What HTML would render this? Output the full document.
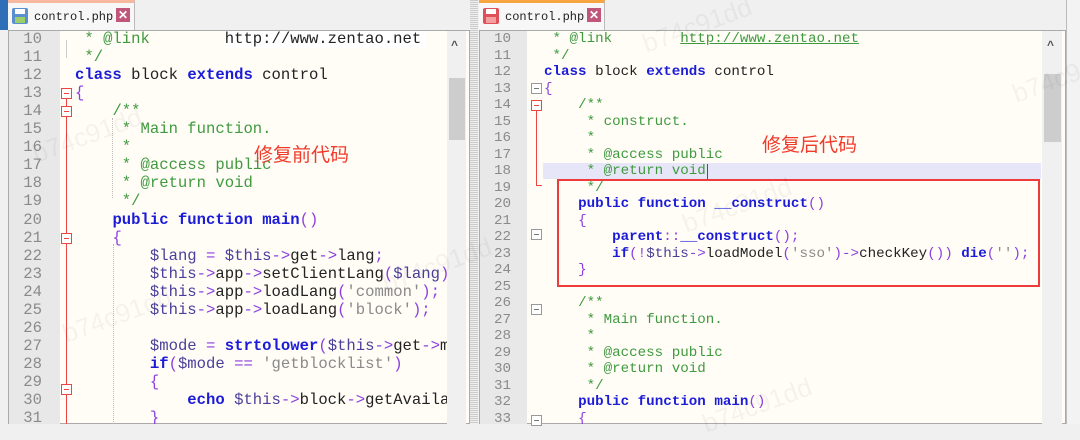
<!DOCTYPE html>
<html><head><meta charset="utf-8"><style>
*{margin:0;padding:0;box-sizing:border-box}
body{width:1080px;height:424px;overflow:hidden;background:#f0f0f0;position:relative;font-family:"Liberation Mono",monospace}
.abs{position:absolute}
.ed{position:absolute;background:#fffdf6;overflow:hidden}
.ln{position:absolute;color:#8a8a8a;text-align:right;white-space:pre}
.cl{position:absolute;white-space:pre}
.k{color:#1c1cd8;font-weight:bold}
.c{color:#3f9a3f}
.v{color:#4a3f9a}
.o{color:#8c3fe0}
.s{color:#8a8a8a}
.t{color:#222}
.fold{position:absolute;width:11px;height:11px;border:1px solid #999;background:#fff}
.fold:after{content:"";position:absolute;left:2px;right:2px;top:4px;height:1px;background:#777}
.fr{border-color:#e44}
.fr:after{background:#e44}
.cn{font-family:"Liberation Sans","Noto Sans CJK SC",sans-serif;color:#f03a2a;position:absolute}
.wm{position:absolute;color:rgba(0,0,0,0.045);font-family:"Liberation Sans",sans-serif;font-size:26px;transform:rotate(-20deg)}
</style></head><body>
<div class="abs" style="left:0;top:0;width:8px;height:30px;background:#2f6fb8"></div>
<div class="abs" style="left:8px;top:0;width:127px;height:30px;background:#f7f7f7;border-top:3px solid #f8b8a0;border-right:1px solid #bbb"></div>
<div class="abs" style="left:12px;top:8px;width:16px;height:16px;background:#5b8fd0;border-radius:2px"></div>
<div class="abs" style="left:15px;top:9px;width:10px;height:5px;background:#fff"></div>
<div class="abs" style="left:15px;top:17px;width:10px;height:6px;background:#9ccf6a"></div>
<div class="abs t" style="left:34px;top:10px;font-size:12px">control.php</div>
<div class="abs" style="left:116px;top:8px;width:14px;height:14px;background:#c0567a;color:#fff;font:bold 12px 'Liberation Sans',sans-serif;text-align:center;line-height:14px">✕</div>
<div class="abs" style="left:479px;top:0;width:126px;height:30px;background:#f7f7f7;border-top:3px solid #f6a540;border-right:1px solid #bbb"></div>
<div class="abs" style="left:483px;top:8px;width:16px;height:16px;background:#e0505a;border-radius:2px"></div>
<div class="abs" style="left:486px;top:9px;width:10px;height:5px;background:#fff"></div>
<div class="abs" style="left:486px;top:17px;width:10px;height:6px;background:#f5a0a0"></div>
<div class="abs t" style="left:505px;top:10px;font-size:12px">control.php</div>
<div class="abs" style="left:587px;top:8px;width:14px;height:14px;background:#c0567a;color:#fff;font:bold 12px 'Liberation Sans',sans-serif;text-align:center;line-height:14px">✕</div>

<div class="abs" style="left:470px;top:0;width:8px;height:424px;background:repeating-linear-gradient(#ccc 0 1px,#eee 1px 2px)"></div>
<div class="abs" style="left:1066px;top:0;width:14px;height:424px;background:#f3f3f3;border-left:1px solid #bbb"></div>

<!-- LEFT EDITOR -->
<div class="ed" style="left:8px;top:30px;width:462px;height:394px;border:1px solid #aaa"></div>
<div class="abs" style="left:9px;top:31px;width:51px;height:393px;background:#e8e8e8"></div>
<div class="abs" style="left:66px;top:92px;width:1px;height:332px;background:#e44"></div>
<div class="abs" style="left:66px;top:40px;width:1px;height:18px;background:#ccc"></div>
<div class="fold fr" style="left:61px;top:88px"></div>
<div class="fold fr" style="left:61px;top:106px"></div>
<div class="fold fr" style="left:61px;top:233px"></div>
<div class="fold fr" style="left:61px;top:384px"></div>
<div class="abs" style="left:112px;top:118px;width:0;height:80px;border-left:1px dotted #bbb"></div>
<div class="abs" style="left:113px;top:244px;width:0;height:180px;border-left:1px dotted #bbb"></div>
<div class="abs" style="left:225px;top:31px;width:200px;height:17px;background:#fff"></div>
<div style="position:absolute;left:0;top:0;width:447px;height:424px;overflow:hidden">
<div id="L" style="position:absolute;left:0;top:30px;font-size:15.6px;line-height:18.05px"></div>
</div>
<div class="abs" style="left:447px;top:31px;width:19px;height:393px;background:#f0f0f0"></div>
<div class="abs" style="left:449px;top:78px;width:16px;height:62px;background:#cdcdcd"></div>
<div class="abs" style="left:451px;top:38px;font:bold 12px 'Liberation Sans',sans-serif;color:#555">^</div>

<!-- RIGHT EDITOR -->
<div class="ed" style="left:479px;top:30px;width:587px;height:394px;border:1px solid #aaa"></div>
<div class="abs" style="left:480px;top:31px;width:47px;height:393px;background:#e8e8e8"></div>
<div class="abs" style="left:543px;top:163px;width:498px;height:16px;background:#e6e6f8"></div>
<div class="abs" style="left:707px;top:164px;width:1px;height:15px;background:#7030c0"></div>
<div class="abs" style="left:536px;top:106px;width:1px;height:80px;background:#e44"></div>
<div class="abs" style="left:536px;top:185px;width:6px;height:1px;background:#e44"></div>
<div class="fold" style="left:531px;top:83px"></div>
<div class="fold fr" style="left:531px;top:100px"></div>
<div class="fold" style="left:531px;top:229px"></div>
<div class="fold" style="left:531px;top:304px"></div>
<div class="fold" style="left:531px;top:415px"></div>
<div style="position:absolute;left:0;top:0;width:1042px;height:424px;overflow:hidden">
<div id="R" style="position:absolute;left:0;top:31px;font-size:14.2px;line-height:16.5px"></div>
</div>
<div class="abs" style="left:1042px;top:31px;width:20px;height:393px;background:#f0f0f0"></div>
<div class="abs" style="left:1044px;top:74px;width:17px;height:68px;background:#cdcdcd"></div>
<div class="abs" style="left:1047px;top:38px;font:bold 12px 'Liberation Sans',sans-serif;color:#555">^</div>
<div class="abs" style="left:557px;top:179px;width:483px;height:108px;border:2px solid #ee3b3b"></div>

<div class="cn" style="left:254px;top:140px;font-size:19px">修复前代码</div>
<div class="cn" style="left:762px;top:130px;font-size:19px">修复后代码</div>

<div class="wm" style="left:1010px;top:60px">b74c91dd</div>
<div class="wm" style="left:30px;top:120px">b74c91dd</div>
<div class="wm" style="left:380px;top:250px">b74c91dd</div>
<div class="wm" style="left:60px;top:300px">b74c91dd</div>
<div class="wm" style="left:640px;top:10px">b74c91dd</div>
<div class="wm" style="left:680px;top:190px">b74c91dd</div>
<div class="wm" style="left:700px;top:390px">b74c91dd</div>

<script>
function render(id,lines,start,nx,cx,lh){
 var h='';
 lines.forEach(function(l,i){
  var y=i*lh;
  h+='<div class="ln" style="left:'+(nx-40)+'px;width:40px;top:'+y+'px">'+(start+i)+'</div>';
  h+='<div class="cl" style="left:'+cx+'px;top:'+y+'px">'+l+'</div>';
 });
 document.getElementById(id).innerHTML=h;
}
var L=[
'<span class="c"> * @link        </span><span class="t">http://www.zentao.net</span>',
'<span class="c"> */</span>',
'<span class="k">class</span><span class="t"> block </span><span class="k">extends</span><span class="t"> control</span>',
'<span class="o">{</span>',
'    <span class="c">/**</span>',
'<span class="c">     * Main function.</span>',
'<span class="c">     *</span>',
'<span class="c">     * @access public</span>',
'<span class="c">     * @return void</span>',
'<span class="c">     */</span>',
'    <span class="k">public</span> <span class="k">function</span> <span class="k">main</span><span class="o">()</span>',
'    <span class="o">{</span>',
'        <span class="v">$lang</span> <span class="o">=</span> <span class="v">$this</span><span class="o">-&gt;</span><span class="t">get</span><span class="o">-&gt;</span><span class="t">lang</span><span class="o">;</span>',
'        <span class="v">$this</span><span class="o">-&gt;</span><span class="t">app</span><span class="o">-&gt;</span><span class="t">setClientLang</span><span class="o">(</span><span class="v">$lang</span><span class="o">);</span>',
'        <span class="v">$this</span><span class="o">-&gt;</span><span class="t">app</span><span class="o">-&gt;</span><span class="t">loadLang</span><span class="o">(</span><span class="s">\'common\'</span><span class="o">);</span>',
'        <span class="v">$this</span><span class="o">-&gt;</span><span class="t">app</span><span class="o">-&gt;</span><span class="t">loadLang</span><span class="o">(</span><span class="s">\'block\'</span><span class="o">);</span>',
'',
'        <span class="v">$mode</span> <span class="o">=</span> <span class="k">strtolower</span><span class="o">(</span><span class="v">$this</span><span class="o">-&gt;</span><span class="t">get</span><span class="o">-&gt;</span><span class="t">mode</span>',
'        <span class="k">if</span><span class="o">(</span><span class="v">$mode</span> <span class="o">==</span> <span class="s">\'getblocklist\'</span><span class="o">)</span>',
'        <span class="o">{</span>',
'            <span class="k">echo</span> <span class="v">$this</span><span class="o">-&gt;</span><span class="t">block</span><span class="o">-&gt;</span><span class="t">getAvailable</span>',
'        <span class="o">}</span>'
];
render('L',L,10,42,75,18.05);
var R=[
'<span class="c"> * @link        <u>http://www.zentao.net</u></span>',
'<span class="c"> */</span>',
'<span class="k">class</span><span class="t"> block </span><span class="k">extends</span><span class="t"> control</span>',
'<span class="o">{</span>',
'    <span class="c">/**</span>',
'<span class="c">     * construct.</span>',
'<span class="c">     *</span>',
'<span class="c">     * @access public</span>',
'<span class="c">     * @return void</span>',
'<span class="c">     */</span>',
'    <span class="k">public</span> <span class="k">function</span> <span class="k">__construct</span><span class="o">()</span>',
'    <span class="o">{</span>',
'        <span class="k">parent</span><span class="o">::</span><span class="k">__construct</span><span class="o">();</span>',
'        <span class="k">if</span><span class="o">(!</span><span class="v">$this</span><span class="o">-&gt;</span><span class="t">loadModel</span><span class="o">(</span><span class="s">\'sso\'</span><span class="o">)-&gt;</span><span class="t">checkKey</span><span class="o">())</span> <span class="k">die</span><span class="o">(</span><span class="s">\'\'</span><span class="o">);</span>',
'    <span class="o">}</span>',
'',
'    <span class="c">/**</span>',
'<span class="c">     * Main function.</span>',
'<span class="c">     *</span>',
'<span class="c">     * @access public</span>',
'<span class="c">     * @return void</span>',
'<span class="c">     */</span>',
'    <span class="k">public</span> <span class="k">function</span> <span class="k">main</span><span class="o">()</span>',
'    <span class="o">{</span>'
];
render('R',R,10,511,544,16.5);
</script>
</body></html>
